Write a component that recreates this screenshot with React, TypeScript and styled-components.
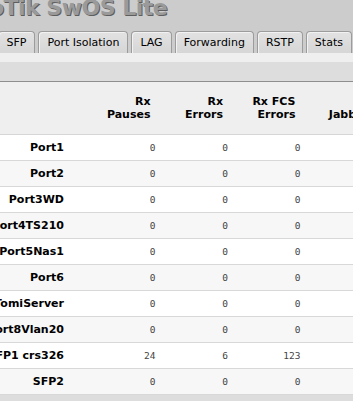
import styled, { createGlobalStyle } from "styled-components";

const GlobalStyle = createGlobalStyle`
  html, body {
    margin: 0;
    padding: 0;
    background: #dddddd;
    overflow: hidden;
  }
  body {
    font-family: "DejaVu Sans", Verdana, sans-serif;
    font-size: 11px;
    color: #000;
  }
`;

// the window is scrolled a bit to the right, so the page is shifted left
const Viewport = styled.div`
  width: 353px;
  height: 401px;
  overflow: hidden;
  background: #dddddd;
`;

const Page = styled.div`
  margin-left: -70px;
  width: 600px;
`;

const Banner = styled.header`
  background: #cccccc;
  display: flex;
  flex-direction: column;
`;

const Title = styled.h1`
  margin: -6px 0 9px 6px;
  font-family: "DejaVu Sans", Verdana, sans-serif;
  font-size: 22px;
  line-height: 28px;
  font-weight: bold;
  letter-spacing: -0.5px;
  color: #9a9a9a;
  text-shadow: 1px 1px 0 #5e5e5e;
  white-space: nowrap;
`;

const TabBar = styled.nav`
  display: flex;
  gap: 3px;
  padding-left: 24px;
  align-items: flex-end;
`;

const Tab = styled.a<{ $active?: boolean }>`
  display: flex;
  align-items: center;
  height: 21px;
  padding: 0 8px;
  border: 1px solid #9c9c9c;
  border-bottom: none;
  border-radius: 4px 4px 0 0;
  background: ${(p) =>
    p.$active ? "#efefef" : "linear-gradient(#e2e2e2, #d6d6d6)"};
  box-shadow: inset 1px 1px 0 #f2f2f2;
  color: #000;
  white-space: nowrap;
  cursor: pointer;
`;

const Strip = styled.div`
  height: 9px;
  background: #efefef;
`;

const Toolbar = styled.div`
  height: 19px;
  background: #dddddd;
  border-bottom: 1px solid #8e8e8e;
`;

const cols = "155px 72.5px 72.5px 72.5px 80px";

const HeadRow = styled.div`
  display: grid;
  grid-template-columns: ${cols};
  height: 52px;
  background: #efefef;
  border-bottom: 1px solid #d6d6d6;
`;

const HeadCell = styled.div`
  display: flex;
  flex-direction: column;
  justify-content: center;
  align-items: flex-end;
  padding-right: 7px;
  font-weight: bold;
  line-height: 13px;
  white-space: nowrap;
`;

const Row = styled.div<{ $odd: boolean }>`
  display: grid;
  grid-template-columns: ${cols};
  height: 25px;
  background: ${(p) => (p.$odd ? "#f7f7f7" : "#ffffff")};
  border-bottom: 1px solid #d8d8d8;
`;

const NameCell = styled.div`
  display: flex;
  align-items: center;
  justify-content: flex-end;
  padding-right: 21px;
  font-weight: bold;
  white-space: nowrap;
`;

const ValueCell = styled.div`
  display: flex;
  align-items: center;
  justify-content: flex-end;
  padding-right: 2px;
  font-family: "DejaVu Sans Mono", monospace;
  font-size: 9.5px;
  color: #444;
`;

const tabs = ["Link", "SFP", "Port Isolation", "LAG", "Forwarding", "RSTP", "Stats", "Errors", "Hosts"];

const headers = [
  ["Rx", "Pauses"],
  ["Rx", "Errors"],
  ["Rx FCS", "Errors"],
  ["Rx", "Jabbers"],
];

const ports: { name: string; values: number[] }[] = [
  { name: "Port1", values: [0, 0, 0, 0] },
  { name: "Port2", values: [0, 0, 0, 0] },
  { name: "Port3WD", values: [0, 0, 0, 0] },
  { name: "Port4TS210", values: [0, 0, 0, 0] },
  { name: "Port5Nas1", values: [0, 0, 0, 0] },
  { name: "Port6", values: [0, 0, 0, 0] },
  { name: "TomiServer", values: [0, 0, 0, 0] },
  { name: "Port8Vlan20", values: [0, 0, 0, 0] },
  { name: "SFP1 crs326", values: [24, 6, 123, 0] },
  { name: "SFP2", values: [0, 0, 0, 0] },
];

export default function App() {
  return (
    <Viewport>
      <GlobalStyle />
      <Page>
        <Banner>
          <Title>MikroTik SwOS Lite</Title>
          <TabBar>
            {tabs.map((t) => (
              <Tab key={t} $active={t === "Errors"}>
                {t}
              </Tab>
            ))}
          </TabBar>
        </Banner>
        <Strip />
        <Toolbar />
        <HeadRow>
          <HeadCell />
          {headers.map((h) => (
            <HeadCell key={h.join(" ")}>
              {h.map((line) => (
                <span key={line}>{line}</span>
              ))}
            </HeadCell>
          ))}
        </HeadRow>
        {ports.map((p, i) => (
          <Row key={p.name} $odd={i % 2 === 1}>
            <NameCell>{p.name}</NameCell>
            {p.values.map((v, j) => (
              <ValueCell key={j}>{v}</ValueCell>
            ))}
          </Row>
        ))}
      </Page>
    </Viewport>
  );
}
